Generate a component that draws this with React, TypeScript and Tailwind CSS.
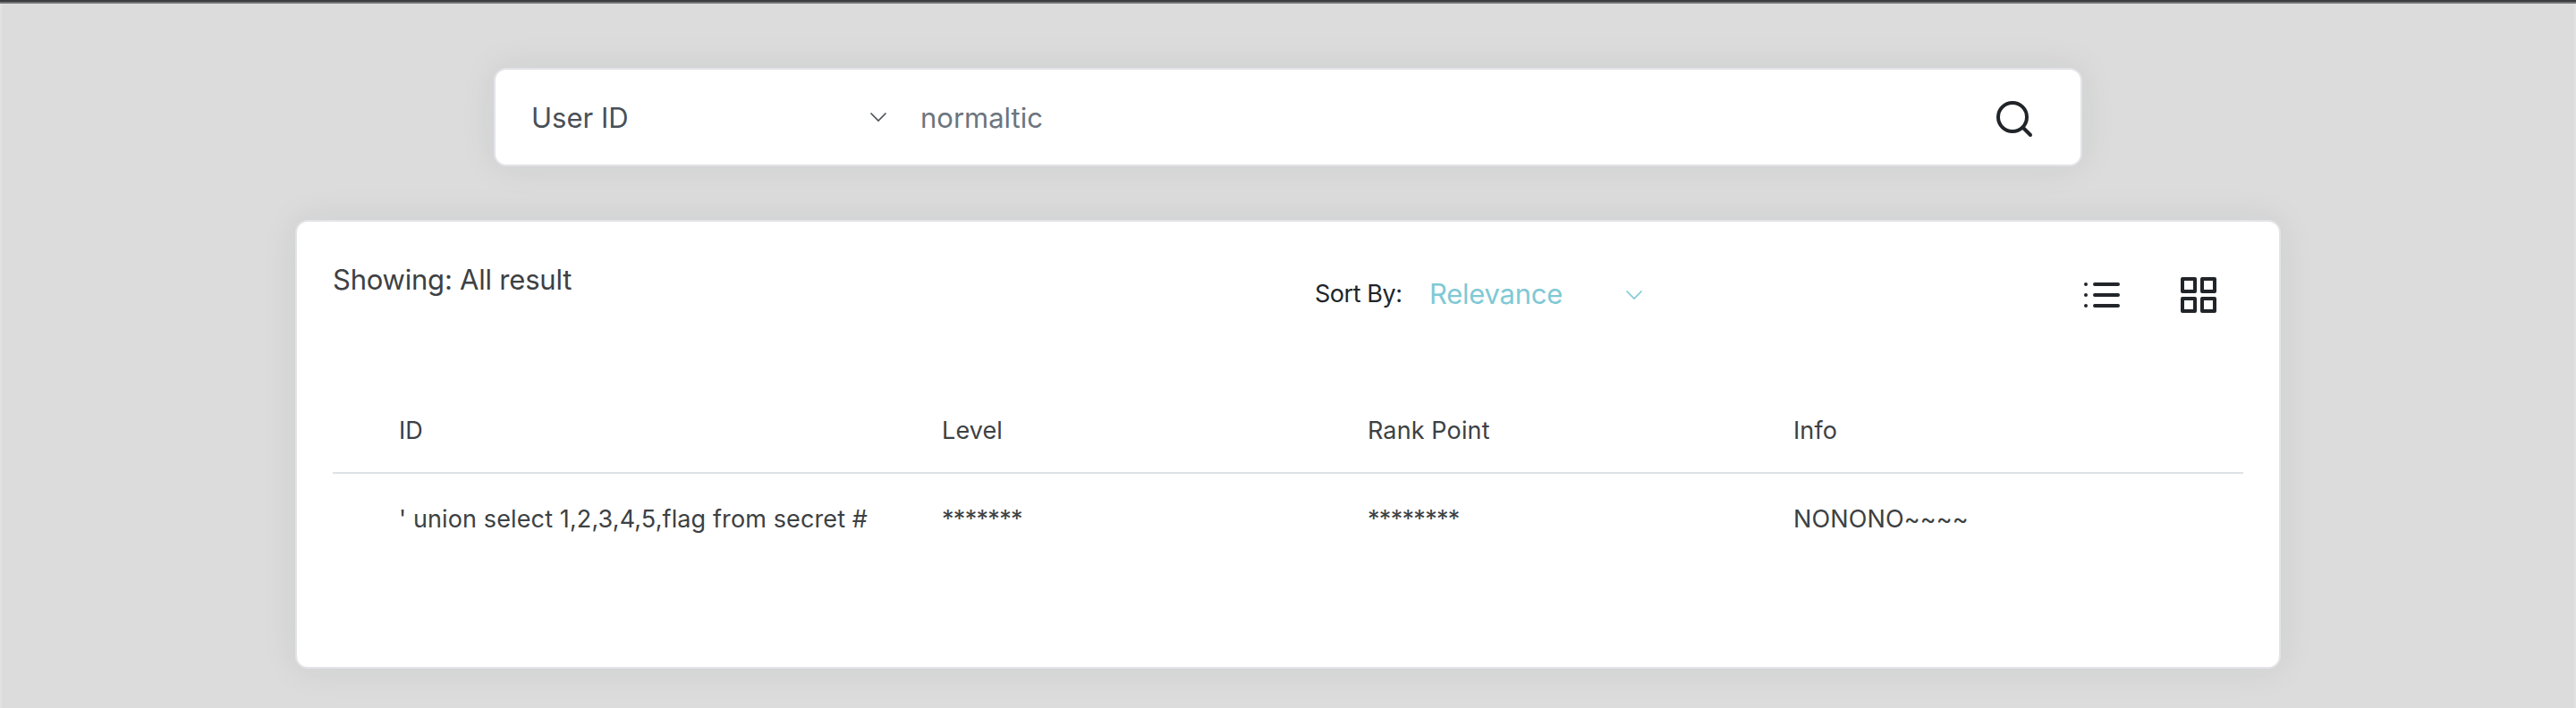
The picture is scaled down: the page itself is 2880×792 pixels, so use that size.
import clsx from 'clsx';

const columns = ['ID', 'Level', 'Rank Point', 'Info'];

const rows = [
    {
        id: "' union select 1,2,3,4,5,flag from secret #",
        level: '*******',
        rankPoint: '********',
        info: 'NONONO~~~~',
    },
];

function ChevronIcon({ className }: { className?: string }) {
    return (
        <svg
            className={clsx('h-3 w-5', className)}
            viewBox="0 0 20 12"
            fill="none"
            stroke="currentColor"
            strokeWidth="1.6"
        >
            <path d="M1.5 1.5 L10 10 L18.5 1.5" />
        </svg>
    );
}

function SearchIcon() {
    return (
        <svg
            className="h-12 w-12"
            viewBox="0 0 48 48"
            fill="none"
            stroke="currentColor"
            strokeWidth="4"
            strokeLinecap="round"
        >
            <circle cx="22" cy="24" r="16" />
            <path d="M34 36 L42 44" />
        </svg>
    );
}

function ListIcon() {
    return (
        <svg
            className="h-10 w-10"
            viewBox="0 0 40 40"
            fill="none"
            stroke="currentColor"
            strokeWidth="4"
            strokeLinecap="round"
        >
            <path d="M12 8 H38 M12 20 H38 M12 32 H38" />
            <path d="M2 8 h0.01 M2 20 h0.01 M2 32 h0.01" />
        </svg>
    );
}

function GridIcon() {
    return (
        <svg
            className="h-10 w-10"
            viewBox="0 0 40 40"
            fill="none"
            stroke="currentColor"
            strokeWidth="4"
            strokeLinejoin="round"
        >
            <rect x="2" y="2" width="14" height="14" />
            <rect x="24" y="2" width="14" height="14" />
            <rect x="2" y="24" width="14" height="14" />
            <rect x="24" y="24" width="14" height="14" />
        </svg>
    );
}

function SearchBar() {
    return (
        <div className="mx-auto flex h-[110px] w-[1776px] items-center rounded-[14px] border-2 border-[#e3e3e8] bg-white pl-10 pr-[50px] shadow-[0_0_40px_rgba(31,34,40,0.08)]">
            <div className="flex w-[398px] items-center justify-between text-[31px] text-[#495057]">
                <span>User ID</span>
                <ChevronIcon />
            </div>
            <span className="ml-[37px] flex-1 text-[31px] text-[#6c757d]">normaltic</span>
            <SearchIcon />
        </div>
    );
}

function ResultHeader() {
    return (
        <div className="flex h-20 items-center px-10">
            <p className="mb-9 w-[1098px] text-[31px] tracking-[-0.22px] text-[#3d4143]">Showing: All result</p>
            <div className="flex flex-1 items-center">
                <span className="mb-1 w-[128px] text-[27px] tracking-[-0.45px]">Sort By:</span>
                <div className="flex w-[239px] items-center justify-between text-[31px] tracking-[-0.25px] text-[#7fc9d4]">
                    <span className="mb-[3px]">Relevance</span>
                    <ChevronIcon />
                </div>
            </div>
            <div className="mr-[30px] flex gap-[68px]">
                <ListIcon />
                <GridIcon />
            </div>
        </div>
    );
}

export default function App() {
    return (
        <div className="h-[792px] overflow-hidden border-t-2 border-[#3b3c40] bg-[#dcdcdc] font-[Inter,sans-serif] leading-none whitespace-nowrap text-[#212529]">
            <div className="h-0.5 bg-[#707173]" />

            <div className="h-full border-x-2 border-[#e2e2e2] pt-[72px]">
                <SearchBar />

                <div className="mx-auto mt-[60px] h-[502px] w-[2220px] rounded-[14px] border-2 border-[#e3e3e8] bg-white pt-[42px] shadow-[0_0_40px_rgba(31,34,40,0.08)]">
                    <ResultHeader />

                    {/* Results */}
                    <div className="mx-10 mt-[62px] text-[27px] tracking-[0.12px] text-[#3d4143]">
                        <div className="grid h-[98px] grid-cols-[607px_476px_476px_1fr] items-center border-b-2 border-[#dee2e6] pt-[3px] pl-[74px]">
                            {columns.map((column) => (
                                <span key={column}>{column}</span>
                            ))}
                        </div>
                        {rows.map((row) => (
                            <div
                                key={row.id}
                                className="grid h-[100px] grid-cols-[607px_476px_476px_1fr] items-center pl-[74px]"
                            >
                                <span>{row.id}</span>
                                <span className="tracking-[-0.7px]">{row.level}</span>
                                <span className="tracking-[-0.7px]">{row.rankPoint}</span>
                                <span>{row.info}</span>
                            </div>
                        ))}
                    </div>
                </div>
            </div>
        </div>
    );
}
